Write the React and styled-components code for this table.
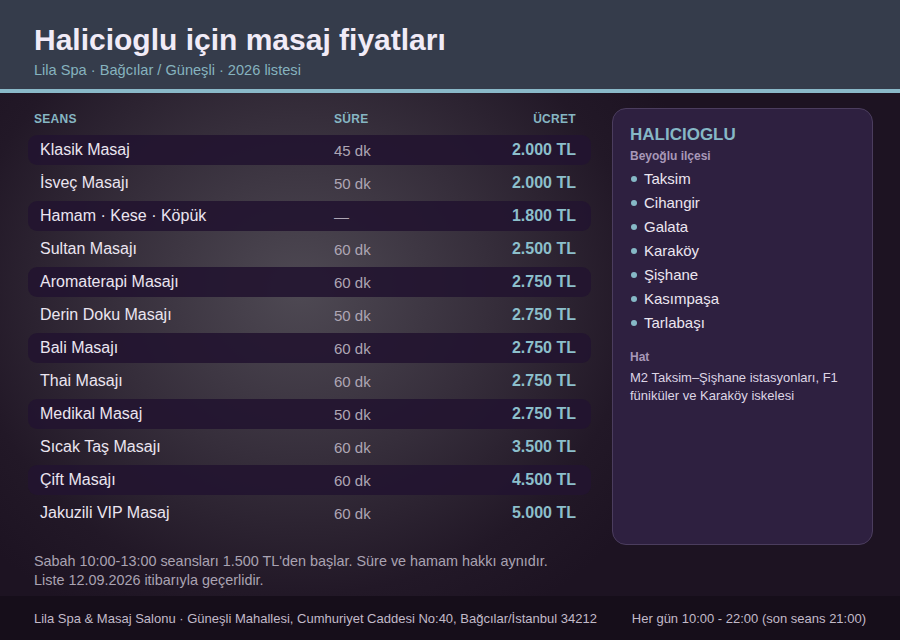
import styled, { createGlobalStyle } from 'styled-components';

const GlobalStyle = createGlobalStyle`
  html, body {
    margin: 0;
    padding: 0;
    background: #1a1120;
  }
  body {
    font-family: "Liberation Sans", Arial, sans-serif;
  }
`;

const Page = styled.div`
  width: 900px;
  height: 640px;
  display: flex;
  flex-direction: column;
  overflow: hidden;
  background: radial-gradient(ellipse 420px 380px at 300px 290px, #4e4953 0%, #362e3b 45%, #221827 80%, #1d1322 100%);
`;

const Header = styled.header`
  height: 93px;
  box-sizing: border-box;
  padding: 22px 34px 0;
  background: #353c4b;
  border-bottom: 4px solid #8ab9c9;
  flex-shrink: 0;
`;

const Title = styled.h1`
  margin: 0;
  font-size: 30px;
  line-height: 36px;
  font-weight: 700;
  color: #f1ebf7;
`;

const Subtitle = styled.div`
  font-size: 14.6px;
  line-height: 18px;
  color: #86b3bf;
  margin-top: 3px;
`;

const Body = styled.main`
  flex: 1;
  padding: 15px 27px 0 28px;
  display: flex;
  flex-direction: column;
`;

const Main = styled.div`
  display: flex;
  gap: 21px;
  height: 437px;
`;

const Table = styled.section`
  width: 563px;
  display: flex;
  flex-direction: column;
`;

const Cols = styled.div`
  display: grid;
  grid-template-columns: 300px 1fr auto;
  align-items: center;
`;

const HeadRow = styled(Cols)`
  height: 20px;
  padding: 0 15px 0 6px;
  margin-top: 1px;
  margin-bottom: 6px;
  font-size: 12px;
  font-weight: 700;
  letter-spacing: 0.3px;
  color: #86b6c3;
`;

const HeadCell = styled.span`
  text-align: ${({ right }) => (right ? 'right' : 'left')};
`;

const Rows = styled.div`
  display: flex;
  flex-direction: column;
  gap: 3px;
`;

const Row = styled(Cols)`
  height: 30px;
  padding: 0 15px 0 12px;
  grid-template-columns: 294px 1fr auto;
  border-radius: 9px;
  background: ${({ striped }) => (striped ? 'rgba(34, 20, 48, 0.9)' : 'transparent')};
`;

const Name = styled.span`
  font-size: 16px;
  color: #ebe5f0;
`;

const Duration = styled.span`
  font-size: 15px;
  color: #aea6b4;
`;

const Price = styled.span`
  font-size: 16px;
  font-weight: 700;
  color: #8cbfcb;
  text-align: right;
`;

const Panel = styled.aside`
  width: 261px;
  box-sizing: border-box;
  padding: 16px 17px;
  background: #2e2040;
  border: 1px solid #4b3d5e;
  border-radius: 14px;
`;

const PanelTitle = styled.h2`
  margin: 0;
  font-size: 17px;
  line-height: 20px;
  font-weight: 700;
  color: #86b8c6;
`;

const Label = styled.div`
  font-size: 12px;
  line-height: 16px;
  font-weight: 700;
  color: #a898b8;
  margin-top: ${({ gap }) => gap || 0}px;
`;

const List = styled.ul`
  list-style: none;
  margin: 2px 0 0;
  padding: 0;
`;

const Item = styled.li`
  display: flex;
  align-items: center;
  height: 24px;
  font-size: 15px;
  color: #ece6f0;

  &::before {
    content: '';
    width: 6px;
    height: 6px;
    border-radius: 50%;
    background: #86b8c6;
    margin: 2px 7px 0 1px;
  }
`;

const Transit = styled.p`
  margin: 4px 0 0;
  font-size: 13px;
  line-height: 18px;
  color: #ddd5e5;
`;

const Notes = styled.div`
  margin-top: 7px;
  padding-left: 6px;
  font-size: 14.4px;
  line-height: 19px;
  color: #aaa3b2;
`;

const Footer = styled.footer`
  height: 44px;
  flex-shrink: 0;
  display: flex;
  justify-content: space-between;
  align-items: center;
  padding: 0 34px;
  background: #160e1a;
  font-size: 13px;
  color: #c2bac9;
`;

const sessions = [
  ['Klasik Masaj', '45 dk', '2.000 TL'],
  ['İsveç Masajı', '50 dk', '2.000 TL'],
  ['Hamam · Kese · Köpük', '—', '1.800 TL'],
  ['Sultan Masajı', '60 dk', '2.500 TL'],
  ['Aromaterapi Masajı', '60 dk', '2.750 TL'],
  ['Derin Doku Masajı', '50 dk', '2.750 TL'],
  ['Bali Masajı', '60 dk', '2.750 TL'],
  ['Thai Masajı', '60 dk', '2.750 TL'],
  ['Medikal Masaj', '50 dk', '2.750 TL'],
  ['Sıcak Taş Masajı', '60 dk', '3.500 TL'],
  ['Çift Masajı', '60 dk', '4.500 TL'],
  ['Jakuzili VIP Masaj', '60 dk', '5.000 TL'],
];

const areas = ['Taksim', 'Cihangir', 'Galata', 'Karaköy', 'Şişhane', 'Kasımpaşa', 'Tarlabaşı'];

const App = () => (
  <>
    <GlobalStyle />
    <Page>
      <Header>
        <Title>Halicioglu için masaj fiyatları</Title>
        <Subtitle>Lila Spa · Bağcılar / Güneşli · 2026 listesi</Subtitle>
      </Header>
      <Body>
        <Main>
          <Table>
            <HeadRow>
              <HeadCell>SEANS</HeadCell>
              <HeadCell>SÜRE</HeadCell>
              <HeadCell right>ÜCRET</HeadCell>
            </HeadRow>
            <Rows>
              {sessions.map(([name, dur, price], i) => (
                <Row key={name} striped={i % 2 === 0}>
                  <Name>{name}</Name>
                  <Duration>{dur}</Duration>
                  <Price>{price}</Price>
                </Row>
              ))}
            </Rows>
          </Table>
          <Panel>
            <PanelTitle>HALICIOGLU</PanelTitle>
            <Label gap={3}>Beyoğlu ilçesi</Label>
            <List>
              {areas.map((a) => (
                <Item key={a}>{a}</Item>
              ))}
            </List>
            <Label gap={15}>Hat</Label>
            <Transit>M2 Taksim–Şişhane istasyonları, F1 füniküler ve Karaköy iskelesi</Transit>
          </Panel>
        </Main>
        <Notes>
          Sabah 10:00-13:00 seansları 1.500 TL'den başlar. Süre ve hamam hakkı aynıdır.
          <br />
          Liste 12.09.2026 itibarıyla geçerlidir.
        </Notes>
      </Body>
      <Footer>
        <span>Lila Spa &amp; Masaj Salonu · Güneşli Mahallesi, Cumhuriyet Caddesi No:40, Bağcılar/İstanbul 34212</span>
        <span>Her gün 10:00 - 22:00 (son seans 21:00)</span>
      </Footer>
    </Page>
  </>
);

export default App;
